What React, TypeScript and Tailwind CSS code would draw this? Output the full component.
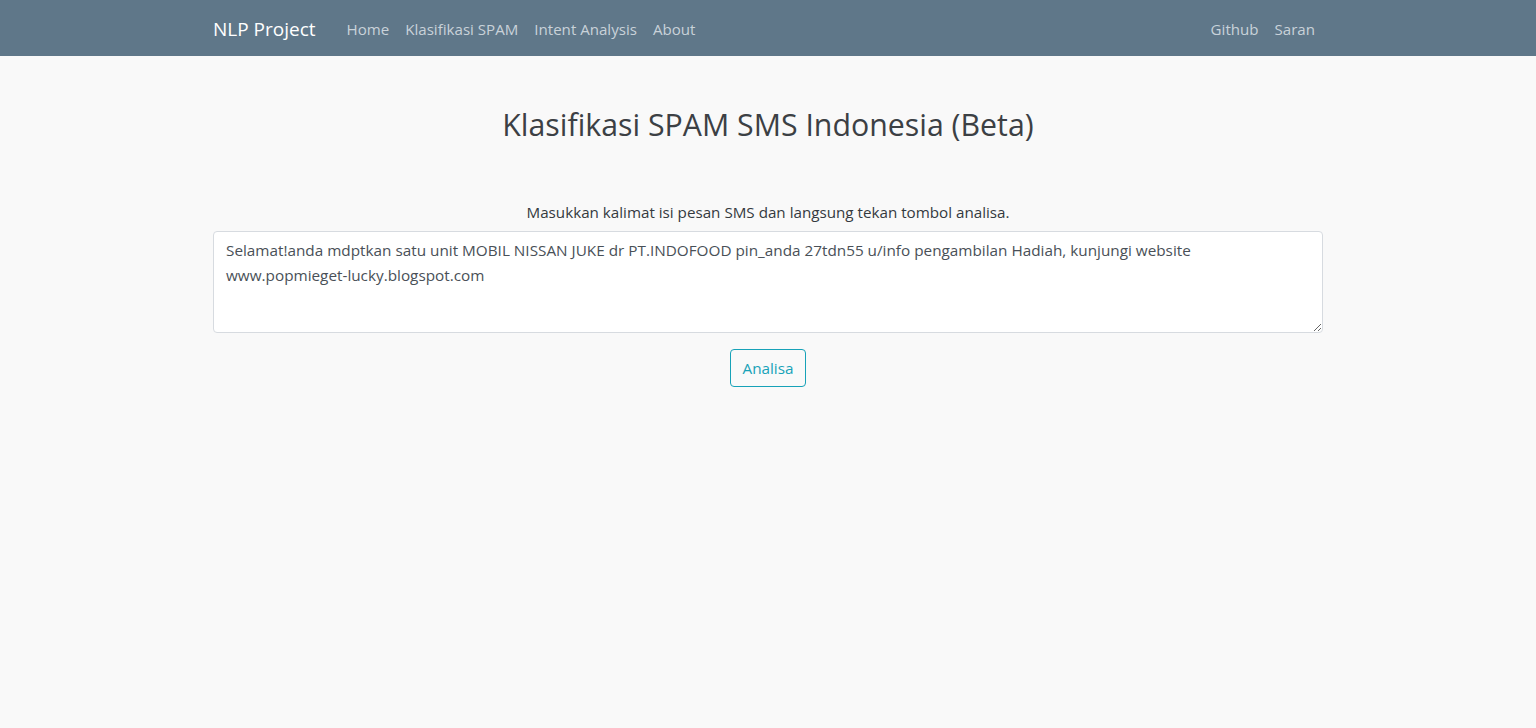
import React, { useState } from 'react';

const navLinks = ['Home', 'Klasifikasi SPAM', 'Intent Analysis', 'About'];

export default function App() {
  const [text, setText] = useState(
    'Selamat!anda mdptkan satu unit MOBIL NISSAN JUKE dr PT.INDOFOOD pin_anda 27tdn55 u/info pengambilan Hadiah, kunjungi website\nwww.popmieget-lucky.blogspot.com'
  );

  return (
    <div className="min-h-screen bg-[#f9f9f9] text-[#343a40] font-['Open_Sans',sans-serif]">
      <nav className="h-[56px] bg-[#5f7789]">
        <div className="mx-auto flex h-full w-[1110px] items-center pt-[2px]">
          <a className="mr-[31px] text-[19px] text-white">NLP Project</a>
          <div className="flex gap-[16px] text-[15.1px] text-[#c9d2d9]">
            {navLinks.map((l) => (
              <a key={l}>{l}</a>
            ))}
          </div>
          <div className="ml-auto flex gap-[16px] pr-[8px] text-[15.1px] text-[#c9d2d9]">
            <a>Github</a>
            <a>Saran</a>
          </div>
        </div>
      </nav>

      <main className="mx-auto w-[1110px]">
        <h1 className="pt-[46px] text-center text-[30.3px] leading-[46px] text-[#3c4044]">
          Klasifikasi SPAM SMS Indonesia (Beta)
        </h1>
        <p className="mt-[52px] mb-[7px] text-center text-[15.2px] leading-[24px] text-[#343a40]">
          Masukkan kalimat isi pesan SMS dan langsung tekan tombol analisa.
        </p>
        <textarea
          value={text}
          onChange={(e) => setText(e.target.value)}
          spellCheck={false}
          className="block h-[102px] w-full resize-y rounded-[4px] border border-[#d7dbe0] bg-white px-[12px] py-[6px] text-[15.3px] leading-[25px] text-[#495057] outline-none"
        />
        <div className="mt-[16px] flex justify-center">
          <button className="h-[38px] rounded-[4px] border border-[#17a2b8] px-[11px] text-[15.3px] text-[#17a2b8]">
            Analisa
          </button>
        </div>
      </main>
    </div>
  );
}
